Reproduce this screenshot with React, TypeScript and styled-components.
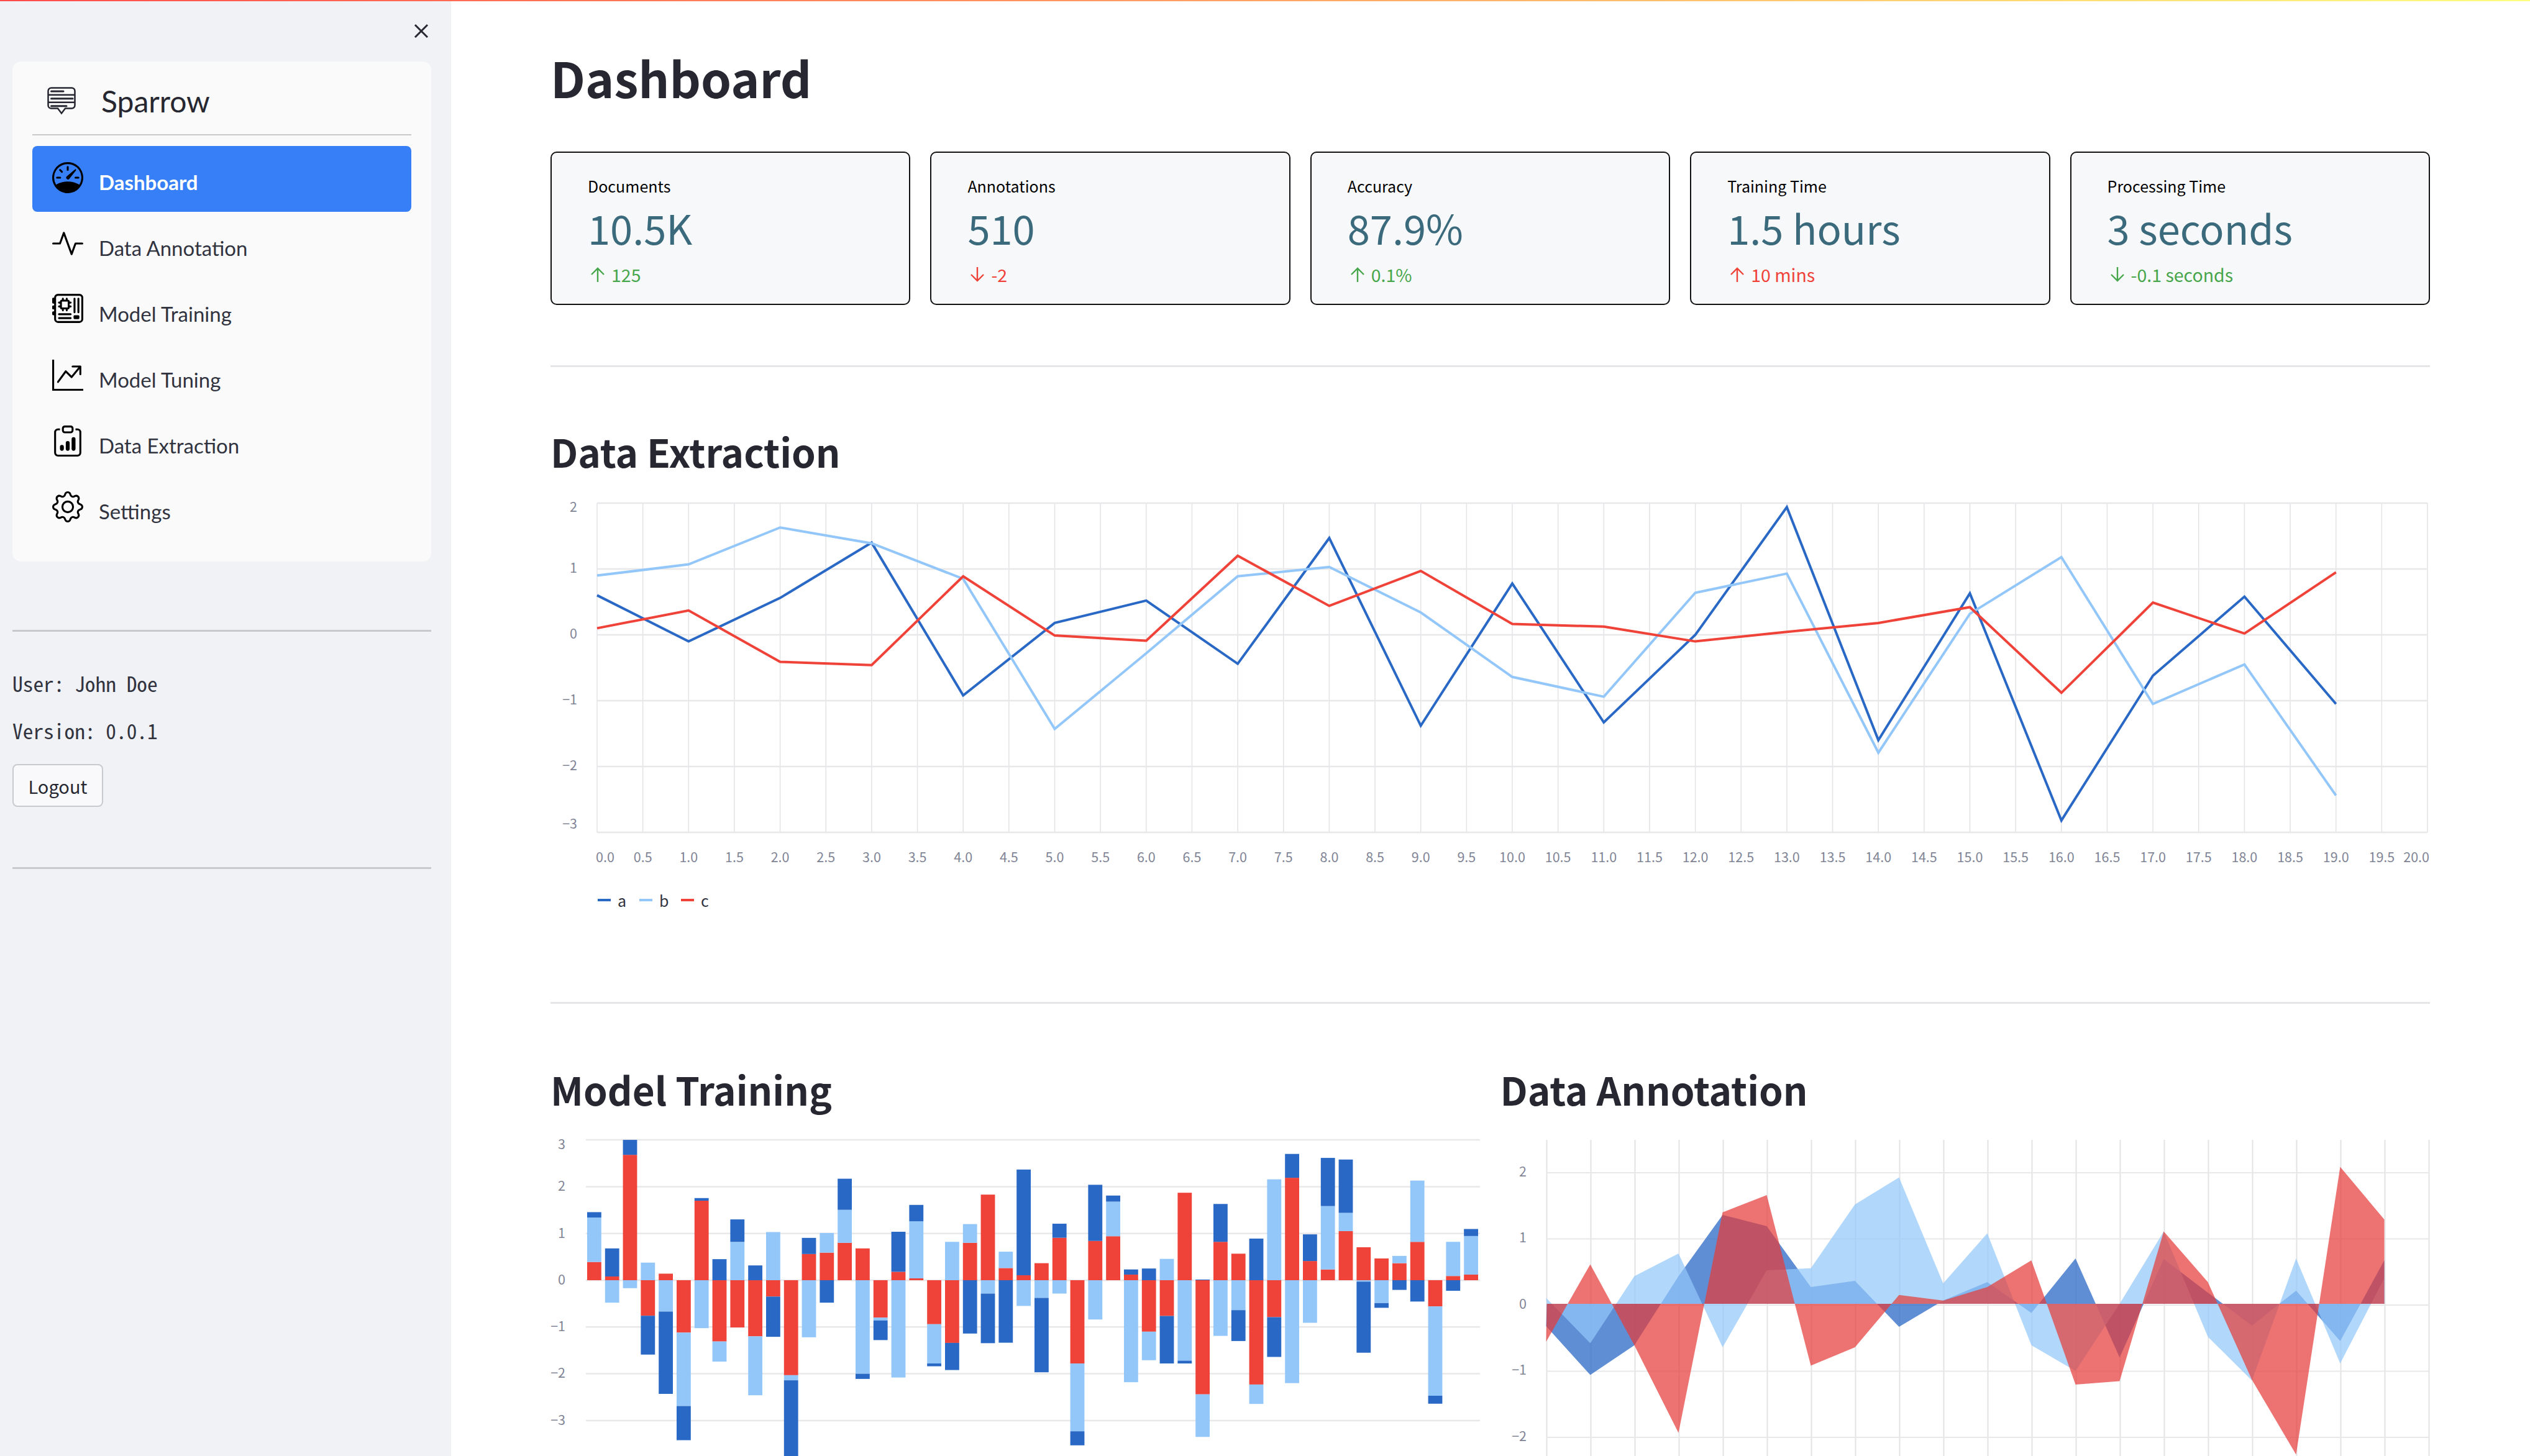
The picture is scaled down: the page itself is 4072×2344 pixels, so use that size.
import React from "react";
import styled, { createGlobalStyle } from "styled-components";
import {
  BsActivity,
  BsClipboardData,
  BsGear,
  BsGraphUpArrow,
  BsMotherboard,
  BsSpeedometer,
} from "react-icons/bs";

const BLUE = "#2968c5";
const LIGHT = "#93c7fa";
const RED = "#ef4238";
const GRID = "#e8e8ea";
const TICK = "#808495";
const SANS = `"Noto Sans CJK SC", "Noto Sans", sans-serif`;

type Metric = { label: string; value: string; delta: string; up: boolean; good: boolean };

const metrics: Metric[] = [
  { label: "Documents", value: "10.5K", delta: "125", up: true, good: true },
  { label: "Annotations", value: "510", delta: "-2", up: false, good: false },
  { label: "Accuracy", value: "87.9%", delta: "0.1%", up: true, good: true },
  { label: "Training Time", value: "1.5 hours", delta: "10 mins", up: true, good: false },
  { label: "Processing Time", value: "3 seconds", delta: "-0.1 seconds", up: false, good: true },
];

const navItems = [
  { label: "Dashboard", icon: BsSpeedometer },
  { label: "Data Annotation", icon: BsActivity },
  { label: "Model Training", icon: BsMotherboard },
  { label: "Model Tuning", icon: BsGraphUpArrow },
  { label: "Data Extraction", icon: BsClipboardData },
  { label: "Settings", icon: BsGear },
];

const lineA = [0.6, -0.1, 0.56, 1.4, -0.92, 0.18, 0.52, -0.44, 1.47, -1.38, 0.78, -1.33, 0, 1.94, -1.6, 0.63, -2.82, -0.62, 0.58, -1.05];
const lineB = [0.9, 1.07, 1.63, 1.39, 0.85, -1.43, -0.28, 0.89, 1.03, 0.34, -0.64, -0.94, 0.64, 0.93, -1.79, 0.32, 1.18, -1.05, -0.45, -2.44];
const lineC = [0.1, 0.37, -0.41, -0.46, 0.89, -0.01, -0.09, 1.2, 0.44, 0.97, 0.165, 0.125, -0.1, 0.045, 0.18, 0.42, -0.88, 0.49, 0.02, 0.95];

// [a, b, c], stacked c, b, a away from zero
const bars = [
  [0.115, 0.95, 0.39], [0.6, -0.48, 0.08], [0.32, -0.17, 2.68], [-0.83, 0.376, -0.76], [-1.76, -0.67, 0.14],
  [-0.73, -1.57, -1.12], [0.056, -1.025, 1.7], [0.45, -0.43, -1.31], [0.48, 0.82, -1.01], [0.316, -1.26, -1.2],
  [-0.86, 1.03, -0.35], [-2.3, -0.11, -2.03], [0.345, -1.22, 0.56], [-0.48, 0.42, 0.59], [0.665, 0.705, 0.8],
  [-0.11, -2.0, 0.68], [-0.42, -0.06, -0.8], [0.856, -2.08, 0.18], [0.35, 1.22, 0.04], [-0.06, -0.84, -0.94],
  [-0.58, 0.82, -1.34], [-1.14, 0.4, 0.8], [-1.06, -0.286, 1.83], [-1.336, 0.35, 0.26], [2.26, -0.55, 0.106],
  [-1.59, -0.378, 0.364], [0.3, -0.286, 0.908], [-0.3, -1.45, -1.78], [1.2, -0.84, 0.84], [0.13, 0.74, 0.94],
  [0.11, -2.18, 0.12], [0.25, -0.61, -1.1], [-1.015, 0.456, -0.765], [-0.06, -1.72, 1.87], [0.014, -0.91, -2.44],
  [0.81, -1.19, 0.82], [-0.66, -0.64, 0.567], [0.89, -0.415, -2.23], [-0.85, 2.157, -0.79], [0.51, -2.2, 2.19],
  [0.57, -0.91, 0.41], [1.03, 1.355, 0.23], [1.14, 0.39, 1.05], [-1.52, -0.03, 0.705], [-0.1, -0.49, 0.465],
  [-0.207, 0.156, 0.364], [-0.456, 1.31, 0.82], [-0.17, -1.91, -0.56], [-0.226, 0.73, 0.09], [0.15, 0.825, 0.12],
];

const areaA = [-0.34, -1.08, -0.63, 0.42, 1.35, 1.18, 0.255, 0.35, -0.35, 0.05, 0.33, -0.14, 0.69, -0.815, 0.68, 0.17, -0.33, 0.2, -0.565, 0.66];
const areaB = [0.09, -0.6, 0.42, 0.765, -0.66, 0.51, 0.54, 1.51, 1.92, 0.31, 1.07, -0.63, -1.02, 0, 1.1, -0.5, -1.165, 0.69, -0.905, 0.39];
const areaC = [-0.575, 0.6, -0.63, -1.96, 1.39, 1.65, -0.94, -0.66, 0.135, 0.05, 0.255, 0.66, -1.225, -1.175, 1.1, 0.33, -1.155, -2.29, 2.08, 1.28];

const fmt = (v: number) => (v < 0 ? `\u2212${-v}` : `${v}`);

const GlobalStyle = createGlobalStyle`
  html, body {
    margin: 0;
    padding: 0;
    background: #fff;
    overflow: hidden;
  }
  * {
    box-sizing: border-box;
  }
`;

const Shell = styled.div`
  position: relative;
  display: flex;
  width: 100%;
  height: 100vh;
  overflow: hidden;
  font-family: ${SANS};
  color: #262730;
`;

const Decoration = styled.div`
  position: absolute;
  top: 0;
  left: 0;
  right: 0;
  height: 2px;
  background: linear-gradient(90deg, #ff4b4b, #fffd80);
`;

const Sidebar = styled.aside`
  flex: 0 0 726px;
  padding: 0 32px 0 20px;
  background: #f0f2f6;
`;

const CloseRow = styled.div`
  display: flex;
  justify-content: flex-end;
  height: 99px;
  padding: 38px 4px 0 0;
`;

const CloseIcon = styled.svg`
  width: 24px;
  height: 24px;
  stroke: #262730;
  stroke-width: 3;
  fill: none;
`;

const MenuCard = styled.nav`
  height: 805px;
  padding: 0 32px;
  background: #fafafa;
  border-radius: 14px;
`;

const Brand = styled.div`
  display: flex;
  align-items: center;
  height: 119px;
  padding: 10px 0 0 24px;
  border-bottom: 2px solid #c9c9cc;
  font-family: Lato, sans-serif;
  font-size: 48px;
  font-weight: 400;
  color: #262730;
  svg {
    width: 46px;
    height: 45px;
    margin: 0 41px 0 0;
  }
`;

const NavList = styled.div`
  display: flex;
  flex-direction: column;
  margin-top: 17px;
`;

const NavLink = styled.a<{ $active?: boolean }>`
  display: flex;
  align-items: center;
  height: 106px;
  padding: 0 32px;
  border-radius: 8px;
  background: ${(p) => (p.$active ? "#377ff6" : "transparent")};
  color: ${(p) => (p.$active ? "#fff" : "#31333f")};
  font-family: Lato, sans-serif;
  font-size: 33px;
  font-weight: ${(p) => (p.$active ? 700 : 400)};
  svg {
    flex: none;
    width: 50px;
    height: 50px;
    margin: -4px 25px 0 0;
    color: #000;
  }
`;

const NavLabel = styled.span`
  padding-top: 9px;
`;

const SideRule = styled.hr<{ $gap: number }>`
  margin: ${(p) => p.$gap}px 0 0;
  border: 0;
  border-top: 3px solid #c8c9ce;
`;

const InfoLine = styled.p<{ $gap: number }>`
  margin: ${(p) => p.$gap}px 0 0;
  font-family: "Noto Sans Mono CJK SC", "Liberation Mono", monospace;
  font-size: 33.4px;
  line-height: 34px;
  color: #31333f;
`;

const LogoutButton = styled.button`
  display: block;
  width: 146px;
  height: 69px;
  margin-top: 37px;
  padding: 0;
  background: #f9f9fb;
  border: 2.5px solid #c9cace;
  border-radius: 8px;
  font-family: ${SANS};
  font-size: 29px;
  color: #262730;
`;

const Main = styled.main`
  flex: 1;
  min-width: 0;
  padding: 85px 161px 0 160px;
`;

const Title = styled.h1`
  margin: 0;
  font-size: 78.5px;
  font-weight: 700;
  line-height: 79px;
  color: #262730;
`;

const MetricRow = styled.section`
  display: grid;
  grid-template-columns: repeat(5, 1fr);
  gap: 32px;
  margin-top: 80px;
`;

const MetricCard = styled.div`
  height: 247px;
  padding: 35.5px 0 0 58px;
  background: #f7f8fa;
  border: 2.5px solid #111;
  border-radius: 10px;
`;

const MetricLabel = styled.div`
  font-size: 25px;
  line-height: 34px;
  color: #000;
`;

const MetricValue = styled.div`
  margin-top: 15px;
  font-size: 65px;
  line-height: 70px;
  color: #3a6a7b;
`;

const MetricDelta = styled.div<{ $good: boolean }>`
  display: flex;
  align-items: center;
  gap: 10px;
  margin: 24px 0 0 4px;
  font-size: 28.5px;
  line-height: 34px;
  color: ${(p) => (p.$good ? "#47a64b" : "#ef4238")};
  svg {
    width: 24px;
    height: 24px;
    stroke: currentColor;
    stroke-width: 2.4;
    fill: none;
  }
`;

const Rule = styled.hr<{ $gap: number }>`
  margin: ${(p) => p.$gap}px 0 0;
  border: 0;
  border-top: 3px solid #e6e6e8;
`;

const SectionTitle = styled.h2<{ $gap?: number }>`
  margin: ${(p) => p.$gap ?? 0}px 0 0;
  font-size: 62px;
  font-weight: 700;
  line-height: 62px;
  color: #262730;
`;

const ChartSvg = styled.svg<{ $gap: number }>`
  display: block;
  margin-top: ${(p) => p.$gap}px;
  overflow: visible;
  font-family: ${SANS};
`;

const Legend = styled.div`
  display: flex;
  align-items: center;
  height: 36px;
  padding-left: 76px;
  font-size: 25px;
  color: #31333f;
`;

const LegendItem = styled.span<{ $color: string }>`
  display: flex;
  align-items: center;
  width: 67px;
  &::before {
    content: "";
    width: 21px;
    height: 3.5px;
    margin-right: 11px;
    background: ${(p) => p.$color};
  }
`;

const Columns = styled.section`
  display: grid;
  grid-template-columns: 1fr 1fr;
  gap: 32px;
  margin-top: 106px;
`;

const points = (vals: number[], x: (i: number) => number, y: (v: number) => number) =>
  vals.map((v, i) => `${x(i).toFixed(1)},${y(v).toFixed(1)}`).join(" ");

const SparrowLogo = () => (
  <svg viewBox="0 0 46 45" fill="none" stroke="#262730" strokeWidth={2.5}>
    <path d="M6.5 1.5h33a5 5 0 0 1 5 5v23a5 5 0 0 1-5 5H29l-6 8-6-8H6.5a5 5 0 0 1-5-5v-23a5 5 0 0 1 5-5z" />
    <path d="M1.5 12.7h43M1.5 24.7h43" />
    <path strokeWidth={3} strokeLinecap="round" d="M6.5 6.9H26M6.5 18.8H41M6.5 30.7H31" />
  </svg>
);

const UpDownArrow = ({ up }: { up: boolean }) => (
  <svg viewBox="0 0 24 24">
    {up ? <path d="M12 24V2M2 12 12 2l10 10" /> : <path d="M12 0v22M2 12l10 10 10-10" />}
  </svg>
);

const ExtractionChart = () => {
  const x0 = 75;
  const zero = 231;
  const unit = 106;
  const step = 147.3;
  const xAt = (v: number) => x0 + v * step;
  const yAt = (v: number) => zero - v * unit;
  const ticks = Array.from({ length: 41 }, (_, i) => i / 2);
  const yTicks = [2, 1, 0, -1, -2, -3];
  return (
    <ChartSvg $gap={34} width={3025} height={640}>
      {ticks.map((t) => (
        <line key={t} x1={xAt(t)} x2={xAt(t)} y1={yAt(2)} y2={yAt(-3)} stroke="#e3e3e6" strokeWidth={1.5} />
      ))}
      {yTicks.map((t) => (
        <line key={t} x1={x0} x2={xAt(20)} y1={yAt(t)} y2={yAt(t)} stroke={GRID} strokeWidth={2.5} />
      ))}
      {yTicks.map((t) => (
        <text
          key={t}
          x={43}
          y={t === 2 ? yAt(t) + 8 : t === -3 ? yAt(t) - 12 : yAt(t)}
          textAnchor="end"
          dominantBaseline="middle"
          fontSize={21.5}
          fill={TICK}
        >
          {fmt(t)}
        </text>
      ))}
      {ticks.map((t) => (
        <text
          key={t}
          x={t === 0 ? 73 : t === 20 ? 3024 : xAt(t)}
          y={591}
          textAnchor={t === 0 ? "start" : t === 20 ? "end" : "middle"}
          dominantBaseline="middle"
          fontSize={21.5}
          fill={TICK}
        >
          {t.toFixed(1)}
        </text>
      ))}
      {[
        { vals: lineA, color: BLUE },
        { vals: lineB, color: LIGHT },
        { vals: lineC, color: RED },
      ].map((s) => (
        <polyline key={s.color} points={points(s.vals, xAt, yAt)} fill="none" stroke={s.color} strokeWidth={4} />
      ))}
    </ChartSvg>
  );
};

const TrainingChart = () => {
  const zero = 246;
  const unit = 75.3;
  const yAt = (v: number) => zero - v * unit;
  const yTicks = [3, 2, 1, 0, -1, -2, -3];
  const colors = [BLUE, LIGHT, RED];
  return (
    <ChartSvg $gap={31} width={1496} height={498}>
      {[...yTicks, -4].map((t) => (
        <line key={t} x1={57} x2={1496} y1={yAt(t)} y2={yAt(t)} stroke={GRID} strokeWidth={2.5} />
      ))}
      {yTicks.map((t) => (
        <text
          key={t}
          x={24}
          y={t === 3 ? yAt(t) + 9 : yAt(t) + 1}
          textAnchor="end"
          dominantBaseline="middle"
          fontSize={21.5}
          fill={TICK}
        >
          {fmt(t)}
        </text>
      ))}
      {bars.map((bar, i) => {
        let pos = 0;
        let neg = 0;
        return [2, 1, 0].map((k) => {
          const v = bar[k];
          const from = v >= 0 ? pos : neg;
          const to = from + v;
          if (v >= 0) pos = to;
          else neg = to;
          return (
            <rect
              key={`${i}-${k}`}
              x={59 + i * 28.8}
              y={yAt(Math.max(from, to))}
              width={22.8}
              height={Math.abs(v) * unit}
              fill={colors[k]}
            />
          );
        });
      })}
    </ChartSvg>
  );
};

const AnnotationChart = () => {
  const x0 = 74.5;
  const step = 71;
  const zero = 284;
  const unit = 106;
  const xAt = (i: number) => x0 + i * step;
  const yAt = (v: number) => zero - v * unit;
  const gridY = (t: number) => 286 - t * 106.5;
  const yTicks = [2, 1, 0, -1, -2];
  const vTicks = Array.from({ length: 21 }, (_, i) => i);
  const area = (vals: number[]) =>
    `${xAt(0)},${zero} ${points(vals, (i) => xAt(i) - 1, yAt)} ${xAt(19) - 1},${zero}`;
  return (
    <ChartSvg $gap={31} width={1496} height={498}>
      {vTicks.map((t) => (
        <line key={t} x1={xAt(t)} x2={xAt(t)} y1={20} y2={560} stroke="#e3e3e6" strokeWidth={2} />
      ))}
      {yTicks.map((t) => (
        <line key={t} x1={x0} x2={xAt(20)} y1={gridY(t)} y2={gridY(t)} stroke={GRID} strokeWidth={2} />
      ))}
      {yTicks.map((t) => (
        <text key={t} x={42} y={gridY(t)} textAnchor="end" dominantBaseline="middle" fontSize={21.5} fill={TICK}>
          {fmt(t)}
        </text>
      ))}
      <polygon points={area(areaA)} fill={BLUE} fillOpacity={0.75} />
      <polygon points={area(areaB)} fill={LIGHT} fillOpacity={0.72} />
      <polygon points={area(areaC)} fill="#e53d3a" fillOpacity={0.72} />
    </ChartSvg>
  );
};

const App = () => (
  <Shell>
    <GlobalStyle />
    <Decoration />
    <Sidebar>
      <CloseRow>
        <CloseIcon viewBox="0 0 24 24">
          <path d="M2 2l20 20M22 2 2 22" />
        </CloseIcon>
      </CloseRow>
      <MenuCard>
        <Brand>
          <SparrowLogo />
          Sparrow
        </Brand>
        <NavList>
          {navItems.map((item, i) => (
            <NavLink key={item.label} $active={i === 0}>
              <item.icon />
              <NavLabel>{item.label}</NavLabel>
            </NavLink>
          ))}
        </NavList>
      </MenuCard>
      <SideRule $gap={110} />
      <InfoLine $gap={66}>User: John Doe</InfoLine>
      <InfoLine $gap={42}>Version: 0.0.1</InfoLine>
      <LogoutButton>Logout</LogoutButton>
      <SideRule $gap={97} />
    </Sidebar>
    <Main>
      <Title>Dashboard</Title>
      <MetricRow>
        {metrics.map((m) => (
          <MetricCard key={m.label}>
            <MetricLabel>{m.label}</MetricLabel>
            <MetricValue>{m.value}</MetricValue>
            <MetricDelta $good={m.good}>
              <UpDownArrow up={m.up} />
              {m.delta}
            </MetricDelta>
          </MetricCard>
        ))}
      </MetricRow>
      <Rule $gap={97} />
      <SectionTitle $gap={104}>Data Extraction</SectionTitle>
      <ExtractionChart />
      <Legend>
        <LegendItem $color={BLUE}>a</LegendItem>
        <LegendItem $color={LIGHT}>b</LegendItem>
        <LegendItem $color={RED}>c</LegendItem>
      </Legend>
      <Rule $gap={146} />
      <Columns>
        <div>
          <SectionTitle>Model Training</SectionTitle>
          <TrainingChart />
        </div>
        <div>
          <SectionTitle>Data Annotation</SectionTitle>
          <AnnotationChart />
        </div>
      </Columns>
    </Main>
  </Shell>
);

export default App;
